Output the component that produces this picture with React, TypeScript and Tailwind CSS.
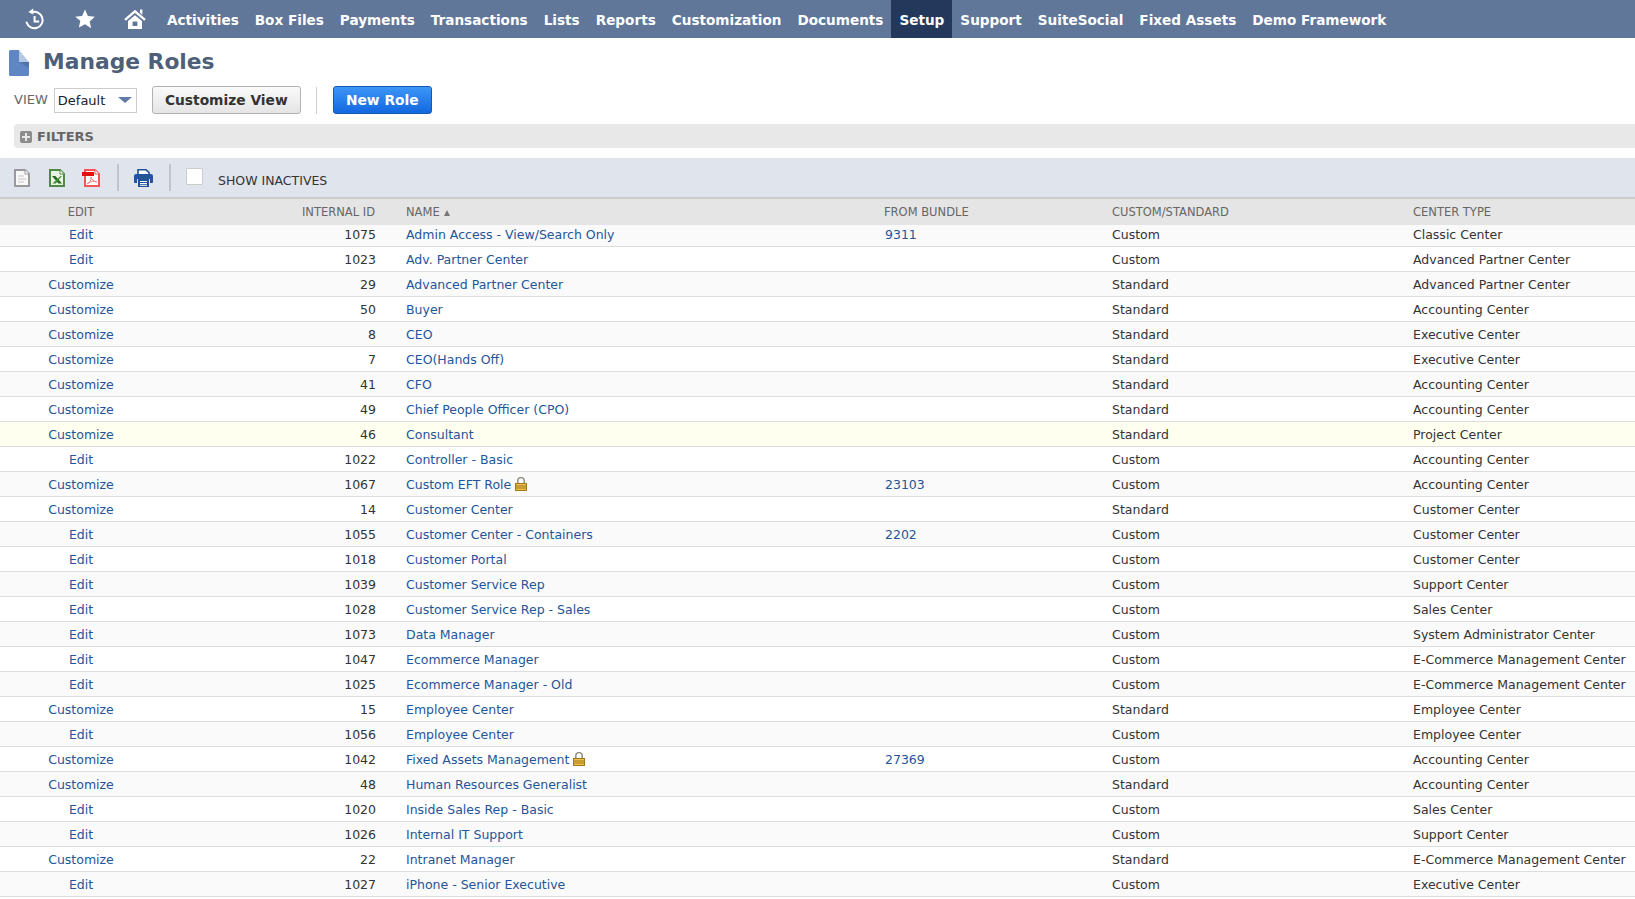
import React from 'react';

const sans = 'font-["DejaVu_Sans",sans-serif]';
const cols = 'grid grid-cols-[162px_214px_508px_228px_301px_1fr]';

const navItems = ['Activities', 'Box Files', 'Payments', 'Transactions', 'Lists', 'Reports', 'Customization', 'Documents', 'Setup', 'Support', 'SuiteSocial', 'Fixed Assets', 'Demo Framework'];

// edit, id, name, bundle, custom/standard, center type, locked
type Role = [string, string, string, string, string, string, boolean?];
const roles: Role[] = [
  ['Edit', '1075', 'Admin Access - View/Search Only', '9311', 'Custom', 'Classic Center'],
  ['Edit', '1023', 'Adv. Partner Center', '', 'Custom', 'Advanced Partner Center'],
  ['Customize', '29', 'Advanced Partner Center', '', 'Standard', 'Advanced Partner Center'],
  ['Customize', '50', 'Buyer', '', 'Standard', 'Accounting Center'],
  ['Customize', '8', 'CEO', '', 'Standard', 'Executive Center'],
  ['Customize', '7', 'CEO(Hands Off)', '', 'Standard', 'Executive Center'],
  ['Customize', '41', 'CFO', '', 'Standard', 'Accounting Center'],
  ['Customize', '49', 'Chief People Officer (CPO)', '', 'Standard', 'Accounting Center'],
  ['Customize', '46', 'Consultant', '', 'Standard', 'Project Center'],
  ['Edit', '1022', 'Controller - Basic', '', 'Custom', 'Accounting Center'],
  ['Customize', '1067', 'Custom EFT Role', '23103', 'Custom', 'Accounting Center', true],
  ['Customize', '14', 'Customer Center', '', 'Standard', 'Customer Center'],
  ['Edit', '1055', 'Customer Center - Containers', '2202', 'Custom', 'Customer Center'],
  ['Edit', '1018', 'Customer Portal', '', 'Custom', 'Customer Center'],
  ['Edit', '1039', 'Customer Service Rep', '', 'Custom', 'Support Center'],
  ['Edit', '1028', 'Customer Service Rep - Sales', '', 'Custom', 'Sales Center'],
  ['Edit', '1073', 'Data Manager', '', 'Custom', 'System Administrator Center'],
  ['Edit', '1047', 'Ecommerce Manager', '', 'Custom', 'E-Commerce Management Center'],
  ['Edit', '1025', 'Ecommerce Manager - Old', '', 'Custom', 'E-Commerce Management Center'],
  ['Customize', '15', 'Employee Center', '', 'Standard', 'Employee Center'],
  ['Edit', '1056', 'Employee Center', '', 'Custom', 'Employee Center'],
  ['Customize', '1042', 'Fixed Assets Management', '27369', 'Custom', 'Accounting Center', true],
  ['Customize', '48', 'Human Resources Generalist', '', 'Standard', 'Accounting Center'],
  ['Edit', '1020', 'Inside Sales Rep - Basic', '', 'Custom', 'Sales Center'],
  ['Edit', '1026', 'Internal IT Support', '', 'Custom', 'Support Center'],
  ['Customize', '22', 'Intranet Manager', '', 'Standard', 'E-Commerce Management Center'],
  ['Edit', '1027', 'iPhone - Senior Executive', '', 'Custom', 'Executive Center'],
];

const HistoryIcon = () => (
  <svg width="20" height="22" viewBox="0 0 20 22" fill="none">
    <path d="M1.600 14.500a8.200 8.200 0 1 0 5-10.200" stroke="#fff" strokeWidth="2" strokeLinecap="round" />
    <path d="M8.200 0.600 3.400 3.900l5 2.600z" fill="#fff" />
    <path d="M9.600 8v5.600h4.600" stroke="#fff" strokeWidth="2" />
  </svg>
);

const StarIcon = () => (
  <svg width="20" height="20" viewBox="0 0 20 20">
    <path d="M10 .6l2.900 6.300 6.900.8-5.100 4.700 1.400 6.800L10 15.200 3.900 18.600l1.400-6.800L.2 7.700l6.900-.8z" fill="#fff" />
  </svg>
);

const HomeIcon = () => (
  <svg width="22" height="20" viewBox="0 0 22 20">
    <path d="M1 10.800 11 2.400l10 8.400" fill="none" stroke="#fff" strokeWidth="2.400" />
    <path d="M16 .4h2.400v5.400L16 3.800z" fill="#fff" />
    <path fillRule="evenodd" d="M4 12l7-5.800 7 5.800v8H4zM8.600 12.400V17h4.800v-4.600z" fill="#fff" />
  </svg>
);

const PageIcon = () => (
  <svg width="20" height="26" viewBox="0 0 20 26">
    <path d="M1.500 0H10v8.500l10 8V24.500a1.500 1.500 0 0 1-1.500 1.500H1.500A1.500 1.500 0 0 1 0 24.500V1.500A1.500 1.500 0 0 1 1.500 0z" fill="#5f86c2" />
    <path d="M10 0l10 12H10z" fill="#b5c8e3" />
    <path d="M10 12h10v6z" fill="#4f73ab" />
  </svg>
);

const DocIcon = () => (
  <svg width="16" height="18" viewBox="0 0 16 18">
    <path d="M1 1h10l4 4v12H1z" fill="#f8f8f8" stroke="#999" strokeWidth="2" />
    <path d="M11 1v4h4" fill="#fff" stroke="#999" strokeWidth="1" />
    <path d="M4 7h6M4 10h8M4 13h6" stroke="#c4c4c4" strokeWidth="1" />
  </svg>
);

const ExcelIcon = () => (
  <svg width="16" height="18" viewBox="0 0 16 18">
    <path d="M1 1h10l4 4v12H1z" fill="#eaf3e2" stroke="#4f8a45" strokeWidth="2" />
    <path d="M11 1v4h4" fill="#fff" stroke="#4f8a45" strokeWidth="1" />
    <path d="M3 7h3.400l6.600 7.500H9.400z" fill="#1f6b1c" />
    <path d="M11.500 7 3.500 14.500h3.300l6-7.500z" fill="#3d8a35" />
  </svg>
);

const PdfIcon = () => (
  <svg width="18" height="18" viewBox="0 0 18 18">
    <path d="M3 1h10l4 4v12H3z" fill="#fff" stroke="#f25555" strokeWidth="2" />
    <path d="M13 1v4h4" fill="#fff" stroke="#f25555" strokeWidth="1" />
    <rect x="0" y="3" width="12" height="4" fill="#e50c0c" />
    <path d="M9 8c.5 3-1.500 6-4 7 2-2 6-3.500 10-2.200-3 .2-5-2-6-4.800z" fill="none" stroke="#f47a7a" strokeWidth="1" />
  </svg>
);

const PrinterIcon = () => (
  <svg width="19" height="18" viewBox="0 0 19 18">
    <path d="M4 .8h8l3 2.600V7H4z" fill="#fff" stroke="#22539c" strokeWidth="1.600" />
    <path d="M2 5h15a2 2 0 0 1 2 2v6a1 1 0 0 1-1 1h-2v-4H3v4H1a1 1 0 0 1-1-1V7a2 2 0 0 1 2-2z" fill="#22539c" />
    <rect x="4" y="10" width="11" height="8" fill="#22539c" />
    <path d="M6 12.500h7M6 14.500h7M6 16.300h7" stroke="#fff" strokeWidth="1" />
  </svg>
);

const LockIcon = () => (
  <svg width="12" height="14" viewBox="0 0 12 14" className="mb-[4px] ml-[4px] shrink-0">
    <path d="M2.800 7V3.600a3.200 3 0 0 1 6.400 0V7" fill="none" stroke="#8f8f80" strokeWidth="1.500" />
    <rect x=".5" y="6.500" width="11" height="7" fill="#eec04a" stroke="#a07a18" />
    <path d="M1 9h10M1 11h10" stroke="#a07a18" strokeWidth="1" />
  </svg>
);

const App: React.FC = () => {
  return (
    <div className={`${sans} h-[899px] overflow-hidden bg-white`}>
      <div className="flex h-[38px] items-stretch bg-[#607799] text-[13.6px] font-bold text-white">
        <div className="flex w-[159px] shrink-0 items-center pl-[25px]">
          <div className="w-[50px]"><HistoryIcon /></div>
          <div className="w-[49px]"><StarIcon /></div>
          <HomeIcon />
        </div>
        {navItems.map(item => (
          <div key={item} className={`flex items-center px-[8px] pt-[2px] ${item === 'Setup' ? 'bg-[#24385b]' : ''}`}>{item}</div>
        ))}
      </div>

      <div className="flex h-[48px] items-center pl-[9px] pt-[1px]">
        <PageIcon />
        <h1 className="ml-[14px] text-[21.8px] font-bold text-[#4d5f79]">Manage Roles</h1>
      </div>

      <div className="flex h-[28px] items-center">
        <span className="ml-[14px] text-[13px] text-[#666]">VIEW</span>
        <div className="ml-[6px] flex h-[25px] w-[83px] items-center justify-between border border-[#ccc] pl-[3px] pr-[4px] pt-[1px] text-[13px] text-[#222]">
          Default
          <span className="mb-[2px] h-0 w-0 border-x-[7px] border-t-[6px] border-x-transparent border-t-[#5f7ba6]" />
        </div>
        <button className="ml-[15px] h-[28px] w-[149px] rounded-[3px] border border-[#b2b2b2] bg-gradient-to-b from-[#fafafa] to-[#e5e5e5] pt-[1px] text-[13.8px] font-bold text-[#333]">Customize View</button>
        <div className="ml-[15px] h-[27px] w-px bg-[#ccc]" />
        <button className="ml-[16px] h-[28px] w-[99px] rounded-[3px] border border-[#125ab2] bg-gradient-to-b from-[#3d96f7] to-[#1367e0] pt-[1px] text-[13.8px] font-bold text-white">New Role</button>
      </div>

      <div className="ml-[14px] mt-[10px] flex h-[24px] items-center rounded-l-[4px] bg-[#e8e8e8] pl-[6px] pt-[1px] text-[13px] font-bold text-[#666]">
        <span className="flex h-[12px] w-[12px] items-center justify-center rounded-[2px] bg-[#8c8c8c]">
          <span className="relative block h-[8px] w-[2px] bg-[#e8e8e8] before:absolute before:left-[-3px] before:top-[3px] before:h-[2px] before:w-[8px] before:bg-[#e8e8e8] before:content-['']" />
        </span>
        <span className="ml-[5px]">FILTERS</span>
      </div>

      <div className="mt-[10px] flex h-[39px] items-center bg-[#dfe4ed] pl-[14px]">
        <DocIcon />
        <div className="ml-[19px]"><ExcelIcon /></div>
        <div className="ml-[17px]"><PdfIcon /></div>
        <div className="ml-[17px] h-[27px] w-[2px] bg-[#c2c6cc]" />
        <div className="ml-[15px]"><PrinterIcon /></div>
        <div className="ml-[16px] h-[27px] w-[2px] bg-[#c2c6cc]" />
        <div className="mb-[3px] ml-[15px] h-[17px] w-[17px] rounded-[1px] border border-[#ccc] bg-white" />
        <span className="ml-[15px] mt-[8px] text-[12.5px] text-[#333]">SHOW INACTIVES</span>
      </div>

      <div className={`${cols} h-[28px] items-center border-t-2 border-[#ccc] bg-[#e5e5e5] pt-[2px] text-[11.5px] text-[#666]`}>
        <div className="text-center">EDIT</div>
        <div className="pr-[1px] text-right">INTERNAL ID</div>
        <div className="flex items-center pl-[30px]">
          NAME
          <span className="ml-[4px] h-0 w-0 border-x-[3px] border-b-[6px] border-x-transparent border-b-[#777]" />
        </div>
        <div>FROM BUNDLE</div>
        <div>CUSTOM/STANDARD</div>
        <div>CENTER TYPE</div>
      </div>

      <div className="text-[12.5px] text-[#333]">
        {roles.map((r, i) => {
          const rowBg = i === 8 ? 'bg-[#fffff0]' : i % 2 === 0 ? 'bg-[#fafafa]' : 'bg-white';
          return (
            <div key={r[1]} className={`${cols} ${rowBg} ${i === 0 ? 'h-[22px]' : 'h-[25px] pt-[3px]'} items-center border-b border-[#ddd]`}>
              <div className="text-center text-[#255599]">{r[0]}</div>
              <div className="text-right">{r[1]}</div>
              <div className="flex items-center pl-[30px] text-[#255599]">
                {r[2]}
                {r[6] && <LockIcon />}
              </div>
              <div className="pl-[1px] text-[#255599]">{r[3]}</div>
              <div>{r[4]}</div>
              <div className="whitespace-nowrap">{r[5]}</div>
            </div>
          );
        })}
      </div>
    </div>
  );
};

export default App;
